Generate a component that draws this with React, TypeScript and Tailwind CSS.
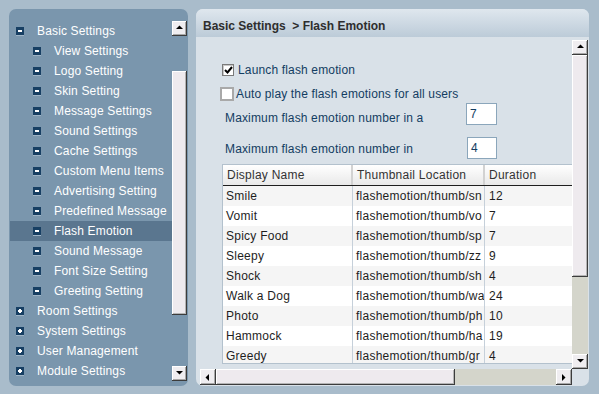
import React from 'react'

const font = { fontFamily: '"Liberation Sans", Arial, sans-serif' }

const menu: { label: string; sub?: boolean; open?: boolean; active?: boolean }[] = [
    { label: 'Basic Settings', open: true },
    { label: 'View Settings', sub: true },
    { label: 'Logo Setting', sub: true },
    { label: 'Skin Setting', sub: true },
    { label: 'Message Settings', sub: true },
    { label: 'Sound Settings', sub: true },
    { label: 'Cache Settings', sub: true },
    { label: 'Custom Menu Items', sub: true },
    { label: 'Advertising Setting', sub: true },
    { label: 'Predefined Message', sub: true },
    { label: 'Flash Emotion', sub: true, active: true },
    { label: 'Sound Message', sub: true },
    { label: 'Font Size Setting', sub: true },
    { label: 'Greeting Setting', sub: true },
    { label: 'Room Settings' },
    { label: 'System Settings' },
    { label: 'User Management' },
    { label: 'Module Settings' },
]

// the thumbnail column is only partly visible in the scrolled grid
const rows = [
    ['Smile', 'flashemotion/thumb/sn', '12'],
    ['Vomit', 'flashemotion/thumb/vo', '7'],
    ['Spicy Food', 'flashemotion/thumb/sp', '7'],
    ['Sleepy', 'flashemotion/thumb/zz', '9'],
    ['Shock', 'flashemotion/thumb/sh', '4'],
    ['Walk a Dog', 'flashemotion/thumb/wa', '24'],
    ['Photo', 'flashemotion/thumb/ph', '10'],
    ['Hammock', 'flashemotion/thumb/ha', '19'],
    ['Greedy', 'flashemotion/thumb/gr', '4'],
]

function TreeIcon({ open }: { open?: boolean }) {
    return (
        <span className="relative w-[8px] h-[8px] bg-[#173f63] shadow-[0_1px_0_#9fb4c6] shrink-0">
            <span className="absolute left-[2px] top-[3px] w-[4px] h-[2px] bg-white" />
            {!open && <span className="absolute left-[3px] top-[2px] w-[2px] h-[4px] bg-white" />}
        </span>
    )
}

function Arrow({ dir }: { dir: 'up' | 'down' | 'left' | 'right' }) {
    const pts = {
        up: '1,5 4.5,1.5 8,5',
        down: '1,2 4.5,5.5 8,2',
        left: '5,1 1.5,4.5 5,8',
        right: '2,1 5.5,4.5 2,8',
    }[dir]
    return (
        <svg width="9" height="9" viewBox="0 0 9 9">
            <polygon points={pts} fill="#000" />
        </svg>
    )
}

function ScrollButton({ dir, className = '' }: { dir: 'up' | 'down' | 'left' | 'right'; className?: string }) {
    return (
        <div
            className={`flex items-center justify-center bg-[#efedf0] shadow-[inset_-1px_-1px_#3c3c3c,inset_1px_1px_#ffffff,inset_-2px_-2px_#a8a8a8] ${className}`}
        >
            <Arrow dir={dir} />
        </div>
    )
}

function Thumb({ className = '' }: { className?: string }) {
    return (
        <div className={`bg-[#eeeaee] shadow-[inset_-1px_-1px_#3c3c3c,inset_1px_1px_#ffffff,inset_-2px_-2px_#b4b4b4] ${className}`} />
    )
}

function CheckBox({ checked }: { checked?: boolean }) {
    if (checked) {
        return (
            <span className="w-[12px] h-[12px] bg-white border border-[#7a7a7a] shadow-[inset_1px_1px_#c8c8c8] flex items-center justify-center shrink-0">
                <svg width="9" height="8" viewBox="0 0 9 8">
                    <path d="M1 4 L3.5 6.5 L8 1" stroke="#000" strokeWidth="2" fill="none" />
                </svg>
            </span>
        )
    }
    return <span className="w-[14px] h-[14px] bg-white border-2 border-[#a9a9a9] shrink-0" />
}

export default function App() {
    return (
        <div className="w-[599px] h-[394px] bg-[#a9bccb] flex text-[12px] tracking-[0.15px] overflow-hidden" style={font}>
            {/* left tree */}
            <div className="mt-[9px] ml-[9px] w-[179px] h-[377px] rounded-[7px] bg-[#7a96ad] pt-[12px] pl-px flex">
                <div className="w-[162px]">
                    {menu.map(m => (
                        <div
                            key={m.label}
                            className={`h-[20px] flex items-center gap-[13px] text-white whitespace-nowrap ${m.sub ? 'pl-[23px]' : 'pl-[6px]'} ${m.active ? 'bg-[#5a768f]' : ''}`}
                        >
                            <TreeIcon open={m.sub || m.open} />
                            <span>{m.label}</span>
                        </div>
                    ))}
                </div>
                <div className="w-[15px] h-[360px] flex flex-col">
                    <ScrollButton dir="up" className="h-[15px] w-[15px]" />
                    <div className="h-[35px]" />
                    <Thumb className="h-[244px] w-[15px]" />
                    <div className="flex-1" />
                    <ScrollButton dir="down" className="h-[15px] w-[15px]" />
                </div>
            </div>

            {/* right panel */}
            <div className="mt-[9px] ml-[8px] w-[393px] h-[377px] rounded-[7px] bg-[#d9e1e8] overflow-hidden flex flex-col">
                <div className="h-[28px] bg-gradient-to-b from-[#dfe7ee] to-[#bccbd8] pl-[7px] pt-[10px] font-bold text-[#2e2e2e] whitespace-pre leading-[14px] tracking-normal">
                    {'Basic Settings  > Flash Emotion'}
                </div>
                <div className="pl-[4px] pt-[3px] pr-px grid grid-cols-[372px_16px] grid-rows-[329px_16px]">
                    {/* viewport */}
                    <div className="overflow-hidden pl-[22px] pt-[23px]">
                        <div className="flex items-center gap-[4px] h-[13px] text-[#133d62]">
                            <CheckBox checked />
                            <span>Launch flash emotion</span>
                        </div>
                        <div className="flex items-center gap-[2px] h-[14px] mt-[11px] -ml-[2px] text-[#133d62]">
                            <CheckBox />
                            <span className="whitespace-nowrap">Auto play the flash emotions for all users</span>
                        </div>
                        <div className="flex mt-[2px] h-[22px] text-[#133d62]">
                            <span className="w-[244px] pl-[3px] pt-[8px] leading-[14px] whitespace-nowrap">Maximum flash emotion number in a</span>
                            <span className="w-[31px] h-[22px] bg-white border border-[#8ba6bb] pl-[3px] pt-[3px] leading-[14px]">7</span>
                        </div>
                        <div className="flex mt-[12px] h-[22px] text-[#133d62]">
                            <span className="w-[245px] pl-[3px] pt-[5px] leading-[14px] whitespace-nowrap">Maximum flash emotion number in</span>
                            <span className="w-[30px] h-[22px] bg-white border border-[#8ba6bb] pl-[3px] pt-[3px] leading-[14px]">4</span>
                        </div>

                        {/* table */}
                        <div className="mt-[5px] w-[350px] h-[200px] border border-r-0 border-[#b3c1cd] overflow-hidden bg-white tracking-[0.25px]">
                            <div className="h-[21px] flex bg-gradient-to-b from-[#ffffff] to-[#e9e9e9] border-b border-[#1e1e1e] text-[#333]">
                                <div className="w-[130px] pl-[4px] flex items-center border-r-2 border-r-[#d2d2d2]">Display Name</div>
                                <div className="w-[132px] pl-[4px] flex items-center border-r-2 border-r-[#d2d2d2]">Thumbnail Location</div>
                                <div className="flex-1 pl-[4px] flex items-center">Duration</div>
                            </div>
                            {rows.map((r, i) => (
                                <div key={r[0]} className={`h-[20px] flex text-[#1e1e1e] ${i % 2 === 0 ? 'bg-[#f5f5f5]' : 'bg-white'}`}>
                                    <div className="w-[130px] pl-[3px] flex items-center border-r border-[#c6d0da] whitespace-nowrap">{r[0]}</div>
                                    <div className="w-[132px] pl-[3px] flex items-center border-r border-[#c6d0da] overflow-hidden whitespace-nowrap">{r[1]}</div>
                                    <div className="flex-1 pl-[4px] flex items-center">{r[2]}</div>
                                </div>
                            ))}
                        </div>
                    </div>

                    {/* vertical scrollbar */}
                    <div className="flex flex-col w-[16px]">
                        <ScrollButton dir="up" className="h-[15px]" />
                        <Thumb className="h-[222px]" />
                        <div className="flex-1 bg-[#d4d5cb]" />
                        <ScrollButton dir="down" className="h-[15px]" />
                    </div>

                    {/* horizontal scrollbar */}
                    <div className="flex h-[16px] w-[372px]">
                        <ScrollButton dir="left" className="w-[16px]" />
                        <Thumb className="w-[239px]" />
                        <div className="flex-1 bg-[#d4d5cb]" />
                        <ScrollButton dir="right" className="w-[16px]" />
                    </div>
                    <div />
                </div>
            </div>
        </div>
    )
}
